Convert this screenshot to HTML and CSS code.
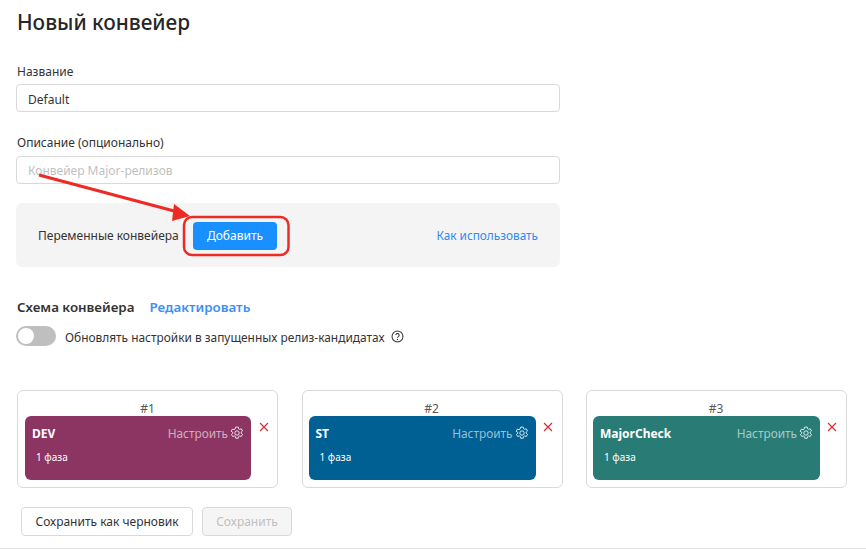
FILE: index.html
```html
<!DOCTYPE html>
<html lang="ru">
<head>
<meta charset="utf-8">
<title>Новый конвейер</title>
<link rel="stylesheet" href="styles.css">
</head>
<body>
<svg width="0" height="0" class="defs"><defs>
<symbol id="gear" viewBox="0 0 16 16"><path fill="none" stroke="currentColor" stroke-width="1.1" stroke-linejoin="round" d="M6.6 1.2h2.8l.4 1.9 1.2.7 1.9-.6 1.4 2.4-1.5 1.3v1.4l1.5 1.3-1.4 2.4-1.9-.6-1.2.7-.4 1.9H6.6l-.4-1.9-1.2-.7-1.9.6-1.4-2.4 1.5-1.3V7.3L1.3 6l1.4-2.4 1.9.6 1.2-.7z"/><circle cx="8" cy="8" r="2.5" fill="none" stroke="currentColor" stroke-width="1.1"/></symbol>
<symbol id="cross" viewBox="0 0 10 10"><path d="M1 1l8 8M9 1L1 9" fill="none" stroke="currentColor" stroke-width="1.1"/></symbol>
</defs></svg>

<main class="page">
  <h1 class="title">Новый конвейер</h1>

  <div class="field">
    <label class="label">Название</label>
    <div class="input input-value">Default</div>
  </div>
  <div class="field field-second">
    <label class="label">Описание (опционально)</label>
    <div class="input placeholder">Конвейер Major-релизов</div>
  </div>

  <section class="vars">
    <span class="vars-label">Переменные конвейера</span>
    <button class="btn-primary">Добавить</button>
    <a class="link">Как использовать</a>
  </section>

  <div class="schema-head">
    <span class="schema-title">Схема конвейера</span>
    <a class="schema-edit">Редактировать</a>
  </div>

  <div class="switch-row">
    <span class="switch"><span class="knob"></span></span>
    <span class="switch-text">Обновлять настройки в запущенных релиз-кандидатах</span>
    <svg class="help" viewBox="0 0 14 14" width="13" height="13"><circle cx="7" cy="7" r="5.9" fill="none" stroke="#333" stroke-width="1.1"/><path d="M5.2 5.5a1.8 1.8 0 1 1 2.7 1.6c-.6.3-.9.6-.9 1.3" fill="none" stroke="#333" stroke-width="1.1"/><circle cx="7" cy="10.2" r=".7" fill="#333"/></svg>
  </div>

  <div class="stages">
    <div class="stage">
      <div class="num">#1</div>
      <div class="stage-row">
        <div class="phase plum">
          <div class="phase-top"><b class="phase-name">DEV</b><span class="tune">Настроить<svg class="gear"><use href="#gear"/></svg></span></div>
          <div class="phase-count">1 фаза</div>
        </div>
        <svg class="cross"><use href="#cross"/></svg>
      </div>
    </div>
    <div class="stage">
      <div class="num">#2</div>
      <div class="stage-row">
        <div class="phase blue">
          <div class="phase-top"><b class="phase-name">ST</b><span class="tune">Настроить<svg class="gear"><use href="#gear"/></svg></span></div>
          <div class="phase-count">1 фаза</div>
        </div>
        <svg class="cross"><use href="#cross"/></svg>
      </div>
    </div>
    <div class="stage">
      <div class="num">#3</div>
      <div class="stage-row">
        <div class="phase teal">
          <div class="phase-top"><b class="phase-name">MajorCheck</b><span class="tune">Настроить<svg class="gear"><use href="#gear"/></svg></span></div>
          <div class="phase-count">1 фаза</div>
        </div>
        <svg class="cross"><use href="#cross"/></svg>
      </div>
    </div>
  </div>

  <div class="actions">
    <button class="btn">Сохранить как черновик</button>
    <button class="btn btn-disabled">Сохранить</button>
  </div>
</main>

<svg class="annotation" width="866" height="549" viewBox="0 0 866 549">
  <path d="M39 175 L176 211.5" stroke="#ee2a24" stroke-width="3" fill="none"/>
  <path d="M190 216 L174 204 L172 221 Z" fill="#ee2a24"/>
  <rect x="184" y="217" width="104.500" height="38" rx="8" fill="none" stroke="#ee2a24" stroke-width="2.500"/>
</svg>
</body>
</html>
```
FILE: styles.css
```css
* { box-sizing: border-box; }
html, body { margin: 0; padding: 0; }
body {
  width: 866px;
  height: 549px;
  overflow: hidden;
  background: #fff;
  color: #333;
  font-family: "Noto Sans", "Open Sans", sans-serif;
  font-size: 12px;
  position: relative;
}
.defs { position: absolute; }
.page {
  height: 549px;
  padding: 8px 0 0 16px;
  border-bottom: 1px solid #e2e2e2;
}
.title {
  margin: 0 0 0 1px;
  font-size: 20.8px;
  line-height: 28px;
  font-weight: 500;
  color: #262626;
}
.field { width: 544px; margin-top: 27px; }
.field-second { margin-top: 22px; }
.label {
  display: block;
  margin-left: 1px;
  height: 21px;
  line-height: 18px;
  color: #333;
}
.field-second .label { height: 22px; }
.input {
  height: 28px;
  border: 1px solid #d9d9d9;
  border-radius: 4px;
  padding: 0 11px;
  line-height: 28px;
  color: #333;
}
.input-value { line-height: 30px; }
.placeholder { color: #bfbfbf; }
.vars {
  width: 544px;
  height: 64px;
  margin-top: 19px;
  background: #f4f4f4;
  border-radius: 6px;
  display: flex;
  align-items: center;
  padding: 1px 22px 0 22px;
}
.vars-label { width: 155px; }
.btn-primary {
  width: 84px;
  height: 28px;
  border: 0;
  border-radius: 4px;
  background: #1890ff;
  color: #fff;
  font: inherit;
  padding: 0;
}
.link { margin: 0 0 2px auto; color: #2d8cf0; font-size: 11.8px; }
.schema-head {
  margin: 31px 0 0 1px;
  height: 18px;
  line-height: 18px;
  font-size: 13.35px;
  font-weight: 600;
  display: flex;
  gap: 15px;
}
.schema-title { color: #333; }
.schema-edit { color: #3d8ff5; }
.switch-row {
  display: flex;
  align-items: center;
  height: 20px;
  margin-top: 10px;
}
.switch {
  width: 40px;
  height: 20px;
  border-radius: 10px;
  background: #bfbfbf;
  padding: 2px;
  flex: none;
}
.knob {
  display: block;
  width: 16px;
  height: 16px;
  border-radius: 50%;
  background: #fff;
}
.switch-text { margin-left: 9px; font-size: 11.9px; line-height: 22px; height: 22px; margin-top: 2px; }
.help { margin-left: 7px; flex: none; }
.stages {
  display: grid;
  grid-template-columns: repeat(3, 261px);
  column-gap: 23.5px;
  margin: 44px 0 0 1px;
}
.stage {
  height: 98px;
  border: 1px solid #d9d9d9;
  border-radius: 6px;
  padding: 10px 7px 0;
}
.stage + .stage { padding-left: 6px; }
.num {
  height: 15px;
  line-height: 15px;
  text-align: center;
  color: #595959;
}
.stage-row { display: flex; align-items: flex-start; }
.phase {
  width: 226px;
  height: 64px;
  border-radius: 6px;
  color: #fff;
  padding: 7px 7px 0 7px;
  flex: none;
}
.stage + .stage .phase { width: 227px; }
.plum { background: #8c3563; }
.blue { background: #006094; }
.teal { background: #287c75; }
.phase-top {
  display: flex;
  justify-content: space-between;
  align-items: center;
  height: 20px;
}
.phase-name { font-size: 12px; font-weight: 700; }
.tune {
  display: flex;
  align-items: center;
  color: rgba(255, 255, 255, 0.6);
  font-size: 11.85px;
}
.gear { width: 14px; height: 14px; margin-left: 2px; color: rgba(255, 255, 255, 0.85); }
.phase-count {
  margin: 7px 0 0 4px;
  font-size: 10px;
  line-height: 14px;
}
.cross { width: 10px; height: 10px; margin: 6px 0 0 8px; color: #d9262f; flex: none; }
.stage + .stage .cross { margin-left: 7px; }
.actions {
  display: flex;
  gap: 9px;
  margin: 19px 0 0 5px;
}
.btn {
  height: 29px;
  width: 172px;
  border: 1px solid #d9d9d9;
  border-radius: 4px;
  background: #fff;
  color: #333;
  font: inherit;
  padding: 0;
}
.btn-disabled {
  width: 90px;
  background: #f5f5f5;
  color: #bfbfbf;
}
.annotation { position: absolute; left: 0; top: 0; pointer-events: none; }
```
